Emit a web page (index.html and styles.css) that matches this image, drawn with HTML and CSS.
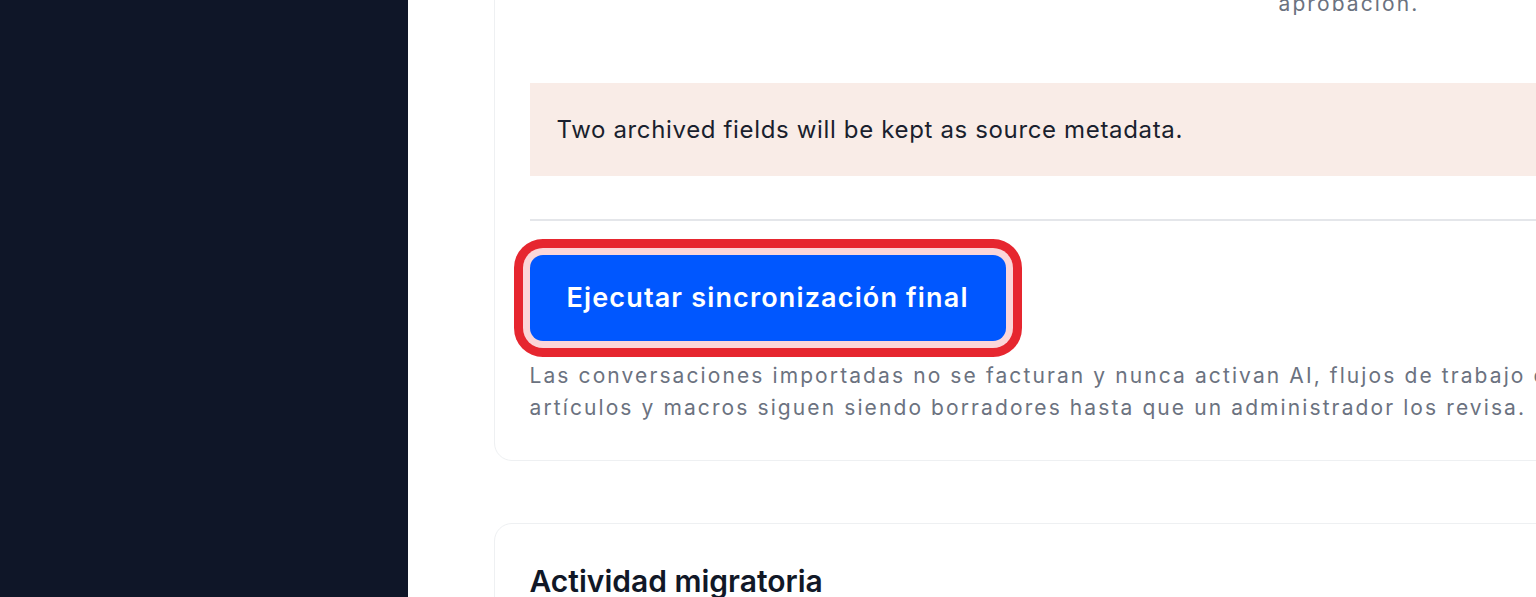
FILE: index.html
```html
<!DOCTYPE html>
<html lang="es">
<head>
<meta charset="utf-8">
<title>Migración</title>
<link rel="stylesheet" href="styles.css">
</head>
<body>
<aside class="sidebar"></aside>
<main class="main">
  <section class="card card-sync">
    <div class="summary">
      <div class="summary-left">Campos asignados</div>
      <div class="summary-right">Los campos personalizados requieren<br>aprobación.</div>
    </div>
    <div class="alert">Two archived fields will be kept as source metadata.</div>
    <hr class="divider">
    <button class="btn-primary" type="button">Ejecutar sincronización final</button>
    <p class="note">Las conversaciones importadas no se facturan y nunca activan AI, flujos de trabajo o SLA. Los<br>artículos y macros siguen siendo borradores hasta que un administrador los revisa.</p>
  </section>
  <section class="card card-activity">
    <h2 class="card-title">Actividad migratoria</h2>
  </section>
</main>
</body>
</html>
```
FILE: styles.css
```css
* { box-sizing: border-box; }
html, body { margin: 0; padding: 0; }
body {
  display: flex;
  height: 597px;
  overflow: hidden;
  background: #ffffff;
  font-family: Inter, "Noto Sans", "Liberation Sans", sans-serif;
  color: #1a1f2e;
}
.sidebar {
  flex: 0 0 408px;
  background: #0f1628;
}
.main {
  flex: 1 1 auto;
  padding-left: 86px;
  overflow: hidden;
  min-width: 0;
}
.card {
  width: 1300px;
  background: #fff;
  border: 1.5px solid #eef0f2;
  border-radius: 18px;
  padding: 36px 36px 37px 34.5px;
}
.card-sync {
  margin-top: -81px;
}
.summary {
  display: grid;
  grid-template-columns: 713px 1fr;
  column-gap: 36px;
  font-size: 21px;
  line-height: 31.5px;
  letter-spacing: 2.1px;
  color: #6b7280;
}
.summary-left { color: #111827; }
.alert {
  margin-top: 64px;
  background: #f9ece7;
  padding: 28.5px 27px;
  font-size: 24px;
  line-height: 36px;
  letter-spacing: 0.65px;
  color: #1a1f2e;
}
.divider {
  margin: 43px 0 0;
  border: 0;
  height: 2px;
  background: #e4e6ea;
}
.btn-primary {
  display: inline-block;
  margin-top: 34px;
  padding: 23px 37px;
  font-family: inherit;
  font-size: 27px;
  font-weight: 600;
  line-height: 40px;
  letter-spacing: 1.15px;
  color: #ffffff;
  background: #0057ff;
  border: 0;
  border-radius: 13px;
  box-shadow: 0 0 0 7px #fbd6d9, 0 0 0 16px #e6262f;
}
.note {
  margin: 19px 0 0;
  font-size: 21px;
  line-height: 31.5px;
  letter-spacing: 2.1px;
  color: #6b7280;
  white-space: nowrap;
}
.card-activity {
  margin-top: 62px;
  padding-top: 39px;
}
.card-title {
  margin: 0;
  font-size: 30px;
  line-height: 36px;
  font-weight: 600;
  color: #111827;
}
```
